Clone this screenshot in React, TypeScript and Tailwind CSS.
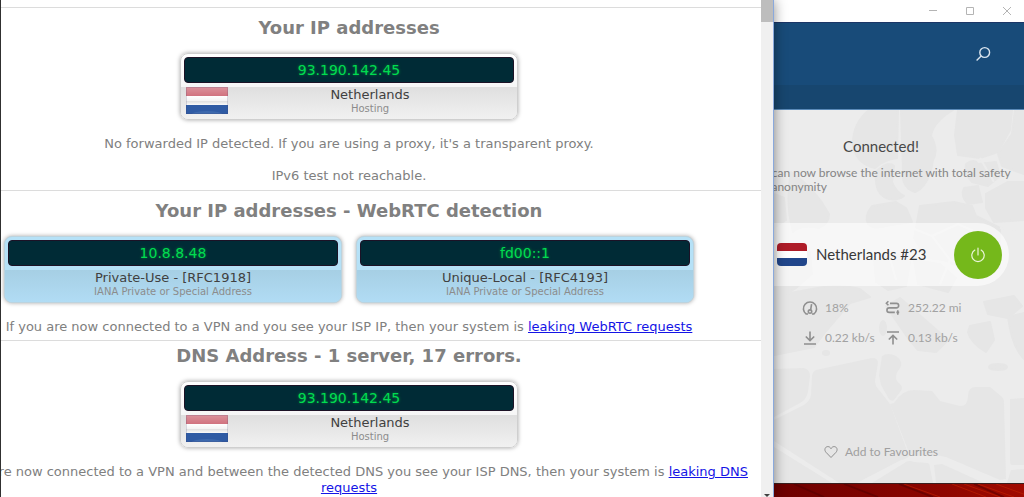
import * as React from 'react';

type CardProps = {
  address: string;
  name: string;
  detail: string;
  tone?: 'grey' | 'blue';
  flag?: boolean;
};

type Stat = {
  label: string;
  value: string;
  icon: React.ReactNode;
};

const GlossyFlag = () => (
  <svg viewBox="0 0 42 27" className="w-[42px] h-[27px] shrink-0" role="img" aria-label="Netherlands">
    <defs>
      <linearGradient id="gloss" x1="0" y1="0" x2="0" y2="1">
        <stop offset="0" stopColor="#fff" stopOpacity="0.5" />
        <stop offset="1" stopColor="#fff" stopOpacity="0.35" />
      </linearGradient>
      <linearGradient id="band" x1="0" y1="0" x2="0" y2="1">
        <stop offset="0" stopColor="#fff" />
        <stop offset="0.5" stopColor="#f4f4f4" />
        <stop offset="0.55" stopColor="#dedede" />
        <stop offset="1" stopColor="#fafafa" />
      </linearGradient>
    </defs>
    <rect width="42" height="9" fill="#b8273a" />
    <rect y="9" width="42" height="9" fill="url(#band)" />
    <rect y="18" width="42" height="9" fill="#2f5ba4" />
    <rect width="42" height="9" fill="url(#gloss)" />
    <ellipse cx="21" cy="27" rx="15" ry="3" fill="#5f8cc4" opacity="0.3" />
    <rect x="0.5" y="0.5" width="41" height="26" fill="none" stroke="#3b3b6b" strokeOpacity="0.18" />
  </svg>
);

const AddressCard: React.FC<CardProps> = ({ address, name, detail, tone = 'grey', flag }) => {
  const blue = tone === 'blue';
  return (
    <div
      className={`w-[338px] shrink-0 overflow-hidden rounded-lg border shadow-[0_0_4px_rgba(0,0,0,0.35)] ${
        blue ? 'border-[#bcd3de] bg-[#b5e1f7]' : 'border-[#cfcfcf] bg-gradient-to-b from-white to-[#ededed]'
      }`}
    >
      <div className="px-[3px] pt-[3px] pb-1">
        <div className="h-[26px] rounded border border-[#1c1226] bg-[#002b36] text-center text-sm leading-6 text-[#00dc50] [text-shadow:0_0_3px_#00883a]">
          {address}
        </div>
      </div>
      <div
        className={`flex h-8 items-start px-[5px] bg-gradient-to-b ${
          blue ? 'from-[#a6cfe4] to-[#b1dcf4]' : 'from-[#dfdfdf] to-[#f1f1f1]'
        }`}
      >
        {flag && <GlossyFlag />}
        <div className="flex-1 text-center">
          <div className="text-[13px] leading-4 text-[#404040]">{name}</div>
          <div className="text-[10px] leading-3 text-[#8c8c8c]">{detail}</div>
        </div>
      </div>
    </div>
  );
};

const Heading: React.FC<{ children: React.ReactNode }> = ({ children }) => (
  <h2 className="text-lg leading-6 font-bold text-[#808080]">{children}</h2>
);

const Leak: React.FC<{ children: React.ReactNode }> = ({ children }) => (
  <a href="#leak" className="text-[#1414e6] underline">
    {children}
  </a>
);

const LeakTest = () => (
  <main className="flex min-w-0 flex-1 overflow-hidden border-l border-[#303030] bg-white">
    {/* the page is scrolled sideways, so it starts left of the window edge */}
    <div className="-ml-16 min-w-0 flex-1 pt-[7px] text-center text-[13px] leading-4 text-[#808080]">
      <section className="border-t border-[#dcdcdc] pt-2 pb-[6px]">
        <Heading>Your IP addresses</Heading>
        <div className="mt-[13px] flex justify-center">
          <AddressCard address="93.190.142.45" name="Netherlands" detail="Hosting" flag />
        </div>
        <p className="mt-4">No forwarded IP detected. If you are using a proxy, it's a transparent proxy.</p>
        <p className="mt-4">IPv6 test not reachable.</p>
      </section>
      <section className="border-t border-[#dcdcdc] pt-2 pb-[5px]">
        <Heading>Your IP addresses - WebRTC detection</Heading>
        <div className="mt-[13px] flex justify-center gap-[14px]">
          <AddressCard address="10.8.8.48" name="Private-Use - [RFC1918]" detail="IANA Private or Special Address" tone="blue" />
          <AddressCard address="fd00::1" name="Unique-Local - [RFC4193]" detail="IANA Private or Special Address" tone="blue" />
        </div>
        <p className="mt-4">
          If you are now connected to a VPN and you see your ISP IP, then your system is <Leak>leaking WebRTC requests</Leak>
        </p>
      </section>
      <section className="border-t border-[#dcdcdc] pt-[3px]">
        <Heading>DNS Address - 1 server, 17 errors.</Heading>
        <div className="mt-[13px] flex justify-center">
          <AddressCard address="93.190.142.45" name="Netherlands" detail="Hosting" flag />
        </div>
        <p className="mt-4">
          If you are now connected to a VPN and between the detected DNS you see your ISP DNS, then your system is{' '}
          <Leak>leaking DNS requests</Leak>
        </p>
      </section>
    </div>
    <div className="flex w-3 shrink-0 flex-col justify-between bg-[#f0f0f0]">
      <div className="h-[22px] bg-[#bdbdbd]" />
      <svg viewBox="0 0 12 4" className="h-1 w-3">
        <path d="M3 1h6L6 4z" fill="#404040" />
      </svg>
    </div>
  </main>
);

const MapBackdrop = () => (
  <svg
    viewBox="0 0 250 373"
    preserveAspectRatio="xMinYMin slice"
    className="absolute inset-0 h-full w-full"
    aria-hidden="true"
  >
    <rect width="250" height="373" fill="#ececec" />
    <g fill="#e6e6e6" stroke="#e6e6e6" strokeWidth="2" strokeLinejoin="round">
      <path d="M95 0h29l-1 48q-14 2-22 10-18-4-22-22-1-22 16-36z" />
      <path d="M127 0h52q-20 12-22 26 8 14 2 24-4 26-18 32-14-4-12-22z" />
      <path d="M184 0h54l-2 20-12 22-18 6-22-3-3-20z" />
      <path d="M241 0h9v64l-22-8-4-12 14-20z" />
      <path d="M192 54q8-6 12 0l18-2 4 14-12 10-16-4q-8-8-6-18z" />
      <path d="M190 78l14-2 4 16-14 2q-8-8-4-16z" />
      <path d="M212 84l22-12 16 0v38l-30 2-8-14z" />
      <path d="M102 62q12-12 18-6l-2 16q4 10 12 14-8 6-18 2-12-6-10-26z" />
      <path d="M98 96l24-4 10 6 6 14-26 4q-12 4-18-2-4-8 4-18z" />
      <path d="M146 96l34-4 18 4 4 10 24 12v40l-26 6-30-14-18-2-12-20z" />
      <path d="M17 62q24 16 38 42 0 10-10 14-18-4-26 4-8-30-2-60zM0 84l10 4 2 22-12 8z" />
      <path d="M0 140l36 2 2 22-16 14-22 12zM0 186l38-7q26-6 48 0l10 8-20 6-24 28-12 16-40 8z" />
      <path d="M100 150l24-6 12 8-4 24-18 4-12-8zM112 196l14-8 48 42-12 12-18-2-10-12z" />
      <path d="M140 150l26 4 16 14-8 14-30-8zM210 192l30-6 8 10-14 12-20-4z" />
      <path d="M196 216l20-4 4 18-8 12q-16-10-18-20z" />
      <path d="M234 207l16-4v46q-12-12-16-42z" />
      <ellipse cx="224" cy="257" rx="9" ry="3" />
      <ellipse cx="52" cy="243" rx="3" ry="2" />
      <ellipse cx="109" cy="218" rx="3" ry="7" />
    </g>
    <g fill="#e6e6e6">
      <path d="M0 259l30-1q6 2 6 8l-2 16q-2 8-8 11L0 307z" />
      <path d="M42 260l56-12q6 0 6 5l-3 18q0 5 4 9l11 14 19 52q-2 3-8 4l-50 26H70L0 331v-21l30-15q6-4 7-10l1-18q0-5 4-7z" />
      <path d="M108 246q6-4 14 0 8 6 4 12-8 10 0 16 4 4 0 8l-6 8q-2 2-5-1l-8-14-2-10z" />
      <path d="M120 293q8-13 20-13l18 1 8 10 20 5q8 0 8-10 0-9 8-9h14l12 10q2 2 2 6l2 76-6 1-54-23-10-2-20 1q-5-1-8-6l-18-46z" />
      <path d="M236 289l14-1v67h-12q-2 0-2-5zM237 360l13-1v14h-17zM98 373l34-21q3-2 8 0l14 1q2 1 2 5l3 15zM162 373l-2-18 8-1 42 19zM0 337l58 36H0z" />
    </g>
    <g fill="none" stroke="#ececec" strokeWidth="2">
      <path d="M138 118l20 8 18 24 24 8M158 126l26-12 18 8M206 48l14 24M226 118l24 2M116 148l6 22M176 150l-10 24" />
    </g>
  </svg>
);

const stats: Stat[] = [
  {
    label: 'Load',
    value: '18%',
    icon: (
      <>
        <path d="M6 14H4.2A6.6 6.6 0 1 1 11.8 14H10" />
        <path d="M9.6 4.2L8.6 10" />
        <circle cx="8" cy="11.6" r="1.7" />
      </>
    ),
  },
  {
    label: 'Distance',
    value: '252.22 mi',
    icon: (
      <>
        <path d="M5 3.4h6.4a2.2 2.2 0 0 1 0 4.5H4.2a2.2 2.2 0 0 0 0 4.5h5.6" />
        <path d="M3.4 1.2L1.4 3.2l2 2M11.4 12.4h2.8M12.8 10.2v4.6" />
      </>
    ),
  },
  {
    label: 'Download',
    value: '0.22 kb/s',
    icon: <path d="M8 1.5v9M3.8 6.5L8 10.6l4.2-4.1M2 14h12" />,
  },
  {
    label: 'Upload',
    value: '0.13 kb/s',
    icon: <path d="M8 14.5v-9M3.8 9.5L8 5.4l4.2 4.1M2 2h12" />,
  },
];

const VpnClient = () => (
  <aside className="flex w-[250px] shrink-0 flex-col overflow-hidden bg-white font-['Lato','Open_Sans',sans-serif]">
    <div className="flex h-[22px] shrink-0 items-center justify-end gap-[21px] pr-[9px] text-[#b4b4b4]">
      <button type="button" aria-label="Minimise">
        <svg viewBox="0 0 16 16" className="size-4" fill="none" stroke="currentColor">
          <path d="M4 7.5h8" />
        </svg>
      </button>
      <button type="button" aria-label="Maximise">
        <svg viewBox="0 0 16 16" className="size-4" fill="none" stroke="currentColor">
          <path d="M4.5 4.5h7v7h-7z" />
        </svg>
      </button>
      <button type="button" aria-label="Close">
        <svg viewBox="0 0 16 16" className="size-4" fill="none" stroke="currentColor">
          <path d="M4 4l8 8M12 4l-8 8" />
        </svg>
      </button>
    </div>
    <header className="shrink-0 border-t border-b border-t-[#1b3566] border-b-[#5a8ab8] bg-[#184b79]">
      <div className="flex h-[62px] items-center justify-end pr-[33px]">
        <button type="button" aria-label="Search">
          <svg viewBox="0 0 16 16" className="size-4" fill="none" stroke="#d9e4ee" strokeWidth="1.4">
            <circle cx="9.7" cy="6.5" r="4.9" />
            <path d="M6.2 10L1.6 14.6" />
          </svg>
        </button>
      </div>
      <div className="h-6 bg-[#17466f]" />
    </header>
    <div className="relative flex-1 overflow-hidden">
      <MapBackdrop />
      {/* the client window reaches under the browser window */}
      <div className="relative -ml-9 flex h-full flex-col">
        <h1 className="mt-6 text-center text-[15px] leading-6 text-[#484848]">Connected!</h1>
        <p className="mt-2 pl-[11px] text-xs leading-[14px] whitespace-nowrap text-[#858585]">
          You can now browse the internet with total safety
          <br />
          and anonymity
        </p>
        <div className="mt-[29px] mr-[15px] flex h-[63px] items-center rounded-full bg-white/60 pr-[7px] pl-[39px]">
          <svg viewBox="0 0 30 23" className="h-[23px] w-[30px] rounded" role="img" aria-label="Netherlands">
            <rect width="30" height="8" fill="#ae1c28" />
            <rect y="8" width="30" height="7" fill="#fff" />
            <rect y="15" width="30" height="8" fill="#21468b" />
          </svg>
          <span className="ml-[9px] flex-1 text-[15px] text-[#383838]">Netherlands #23</span>
          <button
            type="button"
            aria-label="Disconnect"
            className="flex size-12 items-center justify-center rounded-full bg-[#75b81b] text-white"
          >
            <svg viewBox="0 0 16 16" className="size-4" fill="none" stroke="#eaf5da" strokeWidth="1.2" strokeLinecap="round">
              <path d="M8 1v7M4.8 3.1a6.2 6.2 0 1 0 6.4 0" />
            </svg>
          </button>
        </div>
        <ul className="mt-3 grid grid-cols-[83px_1fr] gap-y-[10px] pl-[64px] text-xs leading-5 text-[#a2a2a2]">
          {stats.map(stat => (
            <li key={stat.label} title={stat.label} className="flex items-center gap-[7px] whitespace-nowrap">
              <svg viewBox="0 0 16 16" className="size-4 shrink-0" fill="none" stroke="#8f8f8f" strokeWidth="1.6">
                {stat.icon}
              </svg>
              {stat.value}
            </li>
          ))}
        </ul>
        <button type="button" className="mt-auto mb-[21px] flex items-center justify-center gap-[7px] text-xs leading-5 text-[#a0a0a0]">
          <svg viewBox="0 0 14 14" className="size-[14px]" fill="none" stroke="#8f8f8f">
            <path d="M7 12.5L2 7.3C-.2 4.8 1.2 1.6 3.8 1.6 5.4 1.6 6.4 2.5 7 3.7 7.6 2.5 8.6 1.6 10.2 1.6c2.6 0 4 3.2 1.8 5.7z" />
          </svg>
          Add to Favourites
        </button>
      </div>
    </div>
    <svg viewBox="0 0 250 14" preserveAspectRatio="none" className="h-[14px] w-full shrink-0 border-t border-[#3a2020]">
      <defs>
        <linearGradient id="ember" x1="0" y1="0" x2="1" y2="0">
          <stop offset="0" stopColor="#6c0000" />
          <stop offset="0.6" stopColor="#8a0500" />
          <stop offset="1" stopColor="#a00a00" />
        </linearGradient>
      </defs>
      <rect width="250" height="14" fill="url(#ember)" />
      <g stroke="#4e0000" strokeOpacity="0.5" strokeWidth="2">
        <path d="M20 0l30 14M70 0l34 14M125 0l34 14M200 0l30 14" />
      </g>
      <g stroke="#c42400" strokeOpacity="0.6">
        <path d="M130 0l36 14M178 0l34 14M190 0l36 14M204 0l36 14M222 0l28 11" />
      </g>
    </svg>
  </aside>
);

const App: React.FC = () => {
  return (
    <div className="flex h-screen overflow-hidden">
      <div className="z-10 flex min-w-0 flex-1 border-r border-[#8aa9dc] font-['DejaVu_Sans',Verdana,sans-serif] shadow-[0_0_12px_rgba(0,0,0,0.45)]">
        <LeakTest />
      </div>
      <VpnClient />
    </div>
  );
};

export default App;
